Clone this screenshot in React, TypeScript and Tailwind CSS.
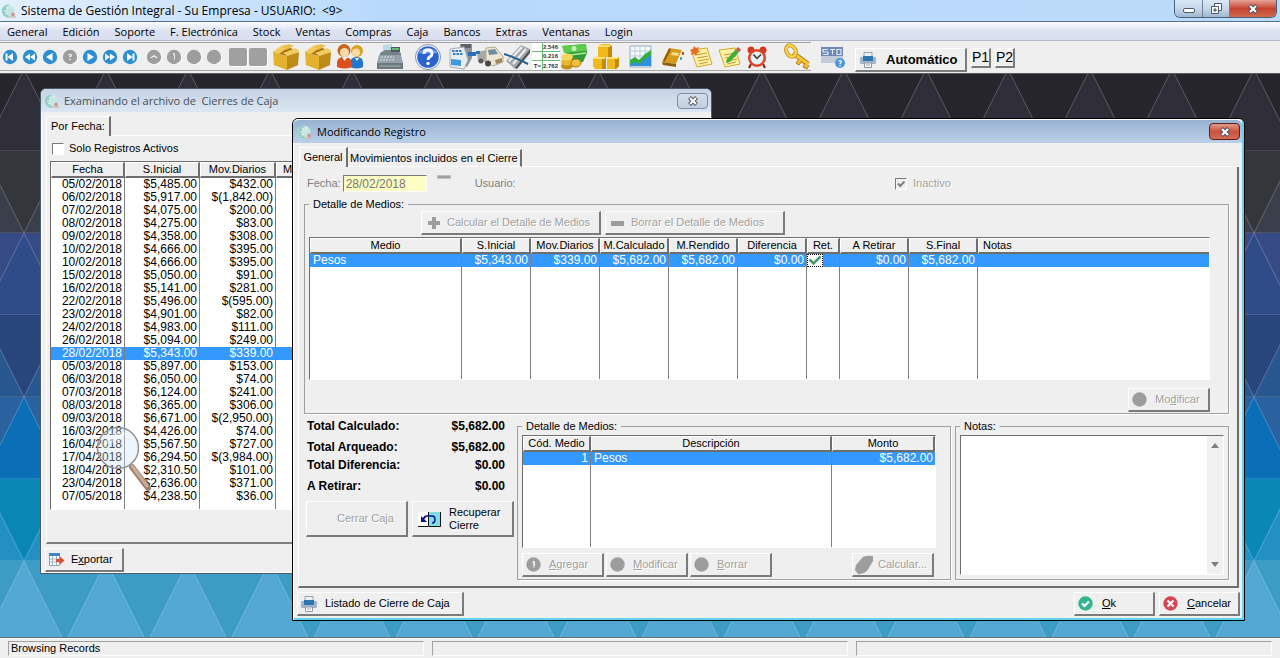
import type { ReactNode } from "react"
import clsx from "clsx"

const menuItems = [
  "General",
  "Edición",
  "Soporte",
  "F. Electrónica",
  "Stock",
  "Ventas",
  "Compras",
  "Caja",
  "Bancos",
  "Extras",
  "Ventanas",
  "Login",
]

const cierres = [
  ["05/02/2018", "$5,485.00", "$432.00"],
  ["06/02/2018", "$5,917.00", "$(1,842.00)"],
  ["07/02/2018", "$4,075.00", "$200.00"],
  ["08/02/2018", "$4,275.00", "$83.00"],
  ["09/02/2018", "$4,358.00", "$308.00"],
  ["10/02/2018", "$4,666.00", "$395.00"],
  ["10/02/2018", "$4,666.00", "$395.00"],
  ["15/02/2018", "$5,050.00", "$91.00"],
  ["16/02/2018", "$5,141.00", "$281.00"],
  ["22/02/2018", "$5,496.00", "$(595.00)"],
  ["23/02/2018", "$4,901.00", "$82.00"],
  ["24/02/2018", "$4,983.00", "$111.00"],
  ["26/02/2018", "$5,094.00", "$249.00"],
  ["28/02/2018", "$5,343.00", "$339.00"],
  ["05/03/2018", "$5,897.00", "$153.00"],
  ["06/03/2018", "$6,050.00", "$74.00"],
  ["07/03/2018", "$6,124.00", "$241.00"],
  ["08/03/2018", "$6,365.00", "$306.00"],
  ["09/03/2018", "$6,671.00", "$(2,950.00)"],
  ["16/03/2018", "$4,426.00", "$74.00"],
  ["16/04/2018", "$5,567.50", "$727.00"],
  ["17/04/2018", "$6,294.50", "$(3,984.00)"],
  ["18/04/2018", "$2,310.50", "$101.00"],
  ["23/04/2018", "$2,636.00", "$371.00"],
  ["07/05/2018", "$4,238.50", "$36.00"],
]

const totals = [
  { label: "Total Calculado:", value: "$5,682.00", gap: "mt-0" },
  { label: "Total Arqueado:", value: "$5,682.00", gap: "mt-2" },
  { label: "Total Diferencia:", value: "$0.00", gap: "mt-[5px]" },
  { label: "A Retirar:", value: "$0.00", gap: "mt-2" },
]

// up / down colours of each 82px band of the wallpaper
const bands = [
  { y: -5, up: "#302e38", down: "#26252c" },
  { y: 77, up: "#3a3f4b", down: "#33363a" },
  { y: 159, up: "#2f4b88", down: "#364a86" },
  { y: 241, up: "#28568f", down: "#28467c" },
  { y: 323, up: "#0b6fb8", down: "#2a62a0" },
  { y: 405, up: "#2390c3", down: "#0a87b5" },
  { y: 487, up: "#52a7d3", down: "#3c9cc3" },
]

function Wallpaper() {
  return (
    <svg className="absolute inset-0 h-full w-full" aria-hidden="true">
      <defs>
        {bands.map((b, i) => (
          <pattern key={i} id={`band${i}`} x={i % 2 === 0 ? 65 : 24} y={b.y} width="82" height="82" patternUnits="userSpaceOnUse">
            <rect width="82" height="82" fill={b.down} />
            <path d="M41 0L82 82H0Z" fill={b.up} stroke="#fff" strokeOpacity=".22" />
          </pattern>
        ))}
      </defs>
      {bands.map((b, i) => (
        <rect key={i} x="0" y={b.y} width="100%" height={i === bands.length - 1 ? 600 : 82} fill={`url(#band${i})`} />
      ))}
    </svg>
  )
}

function AppLogo() {
  return (
    <svg viewBox="0 0 16 16" className="h-4 w-4 shrink-0" aria-hidden="true">
      <circle cx="7" cy="8" r="6.500" fill="#c5e6e2" />
      <path d="M8 1.500A6.500 6.500 0 1 0 10 14A5.500 5.500 0 0 1 5 8Q5 4 8 1.500Z" fill="#93cdc3" />
      <path d="M5 4l2 2M3 8h3M4 11l3-1M9 5l2-2" stroke="#e9f7f5" />
      <circle cx="12" cy="11.500" r="2" fill="#cf9a92" />
      <path d="M9.500 14h5.500" stroke="#d7b3ad" strokeWidth="1.500" />
    </svg>
  )
}

const blue = "#2e8fd0"
const gray = "#9d9d9d"

function NavIcon({ fill = blue, children }: { fill?: string; children?: ReactNode }) {
  return (
    <svg viewBox="0 0 20 20" className="h-5 w-5" aria-hidden="true">
      {fill === gray && <circle cx="10.700" cy="10.700" r="7.300" fill="#fff" />}
      <circle cx="10" cy="10" r="7.200" fill={fill} />
      <g fill="#fff">{children}</g>
    </svg>
  )
}

const navButtons = [
  { name: "Primero", icon: <NavIcon><path d="M5.500 6.500h2v7h-2zM13 6v8l-5.500-4z" /></NavIcon> },
  { name: "Retroceder página", icon: <NavIcon><path d="M10 6.500v7L5 10zM15 6.500v7L10 10z" /></NavIcon> },
  { name: "Anterior", icon: <NavIcon><path d="M12.500 6v8L6 10z" /></NavIcon> },
  { name: "Consultar", icon: <NavIcon fill={gray}><path d="M8 8q2-3 4 0q0 1.500-2 2.500h-.8q0-1.500 1.500-2.500-.7-1-1.700.5zM9.500 12h1.300v1.300H9.500z" /></NavIcon> },
  { name: "Siguiente", icon: <NavIcon><path d="M7.500 6v8l6.500-4z" /></NavIcon> },
  { name: "Avanzar página", icon: <NavIcon><path d="M5 6.500v7l5-3.500zM10 6.500v7l5-3.500z" /></NavIcon> },
  { name: "Último", icon: <NavIcon><path d="M12.500 6.500h2v7h-2zM7 6v8l5.500-4z" /></NavIcon> },
]

const editButtons = [
  { name: "Subir", icon: <NavIcon fill={gray}><path d="M6 11l4-3 4 3h-1.500L10 9.500 7.500 11z" /></NavIcon> },
  { name: "Insertar", icon: <NavIcon fill={gray}><path d="M9 6h1.500l.5 3-.5 4H10V9z" /></NavIcon> },
  { name: "Cambiar", icon: <NavIcon fill={gray} /> },
  { name: "Eliminar", icon: <NavIcon fill={gray} /> },
]

function Box() {
  return (
    <svg viewBox="0 0 32 28" className="h-7 w-8" aria-hidden="true">
      <path d="M3 9l14 4v14L4 22z" fill="#e3b030" />
      <path d="M17 13l12-4-1 13-11 5z" fill="#c08a18" />
      <path d="M3 9L14 3l15 5-12 5z" fill="#a8720e" />
      <path d="M3 9l8-6 5 3-7 5zM17 13l-4-3 13-5 3 4z" fill="#f1cc5c" />
      <path d="M11 3l8-2 5 2-8 4z" fill="#ecc04a" />
    </svg>
  )
}

function Users() {
  return (
    <svg viewBox="0 0 32 28" className="h-7 w-8" aria-hidden="true">
      <circle cx="23" cy="8" r="6" fill="#d9a520" />
      <circle cx="22" cy="9.500" r="4" fill="#f8d9a8" />
      <path d="M16 24v-5q1-5 7-5 6 0 6 6v4q-6 3-13 0z" fill="#2476cc" />
      <path d="M21 15l2 3 2-3z" fill="#fff" />
      <circle cx="10" cy="7.500" r="6.500" fill="#c8651a" />
      <circle cx="10.500" cy="9.500" r="4.500" fill="#fbd9ac" />
      <path d="M3 24v-5q1-5 7-5 7 0 8 6v4q-7 3-15 0z" fill="#dd4f1c" />
      <path d="M8 14l2.500 4 3-4z" fill="#fff" />
    </svg>
  )
}

function CashRegister() {
  return (
    <svg viewBox="0 0 32 28" className="h-7 w-8" aria-hidden="true">
      <path d="M9 2l9-1v9H9z" fill="#b9dbe6" />
      <path d="M6 10l5-3h9l7 3v8H6z" fill="#77838b" />
      <path d="M17 4h9v5h-9z" fill="#4c5a62" />
      <path d="M18 5h7v2h-7z" fill="#64c070" />
      <path d="M5 12h22l2 8H3z" fill="#95a1a8" />
      <path d="M3 20h26v6H3z" fill="#6c777e" />
      <path d="M7 14h13M6 17h14" stroke="#dfe6ea" strokeDasharray="2 1" />
      <path d="M5 23h22" stroke="#a9b4ba" />
    </svg>
  )
}

function Help() {
  return (
    <svg viewBox="0 0 32 28" className="h-7 w-8" aria-hidden="true">
      <circle cx="16" cy="14" r="12.500" fill="#fff" stroke="#8090b8" />
      <circle cx="16" cy="14" r="10.800" fill="#2a62d0" />
      <path d="M6 10q10-10 20 0-8 1-20 0z" fill="#6e9cf0" />
      <path d="M12 11q0-4 4-4t4 3.500q0 2.500-2.500 3.500-1.500 1-1.500 3" fill="none" stroke="#fff" strokeWidth="2.800" />
      <circle cx="16" cy="20.500" r="1.700" fill="#fff" />
    </svg>
  )
}

function Pos() {
  return (
    <svg viewBox="0 0 28 28" className="h-7 w-7" aria-hidden="true">
      <path d="M12 1h12v14l-5 9-6-3z" fill="#8c9196" />
      <path d="M13 1h10v4H13z" fill="#5d6368" />
      <path d="M2 6l14-2 4 13-4 9-14-2z" fill="#e9edf0" stroke="#a7afb5" />
      <path d="M4 8h10M5 11h10" stroke="#2f7fd0" strokeWidth="2" strokeDasharray="2.500 1" />
      <path d="M3 16l10 1v6l-10-1z" fill="#3c9add" />
      <path d="M20 9h8v4h-8z" fill="#2a6fb8" />
    </svg>
  )
}

function Truck() {
  return (
    <svg viewBox="0 0 28 28" className="h-7 w-7" aria-hidden="true">
      <path d="M1 9l13-3 1 12-13 1z" fill="#a8aba9" />
      <path d="M10 5l9-1 6 7 2 2v6l-10 4-7-4z" fill="#eee6d2" stroke="#b3a98f" />
      <path d="M12 7l7-1 3 5-9 1z" fill="#6f8ba0" />
      <circle cx="12" cy="20.500" r="3" fill="#4a4640" />
      <circle cx="5" cy="18" r="2.500" fill="#5b5750" />
      <path d="M19 17l7-2v4l-6 2z" fill="#9b8a5e" />
      <path d="M0 8h4v3H0z" fill="#2f77bd" />
    </svg>
  )
}

function Blade() {
  return (
    <svg viewBox="0 0 28 28" className="h-7 w-7" aria-hidden="true">
      <path d="M2 18L17 2l9 4-15 20z" fill="#a4a9ad" />
      <path d="M5 18L18 4M9 21L22 6" stroke="#eef0f1" strokeWidth="2" />
      <path d="M11 25L26 6v4L13 26z" fill="#4d545a" />
      <path d="M0 11q10 3 24 10" fill="none" stroke="#24618f" strokeWidth="2" />
    </svg>
  )
}

function Sum() {
  return (
    <svg viewBox="0 0 28 28" className="h-7 w-7" aria-hidden="true">
      <path d="M0 0h28v27H0z" fill="#fff" />
      <path d="M0 8.500h28M0 17.500h28M10.500 0v27" stroke="#6cba78" />
      <g fill="#333" fontFamily="Liberation Sans, sans-serif" fontSize="6" fontWeight="700" textAnchor="end">
        <text x="26" y="6">2.546</text>
        <text x="26" y="15">0.216</text>
        <text x="26" y="25">2.762</text>
        <text x="9" y="25">T=</text>
      </g>
    </svg>
  )
}

function Money() {
  return (
    <svg viewBox="0 0 28 28" className="h-7 w-7" aria-hidden="true">
      <path d="M2 3l24-2 1 9-4 9-11 1z" fill="#2f9c35" />
      <path d="M2 3l24-2v7L4 10z" fill="#5cc94f" />
      <circle cx="14" cy="5.500" r="2.500" fill="#c8f0b4" />
      <path d="M10 12l16-2" stroke="#b4e8a0" strokeWidth="1.500" />
      <ellipse cx="7" cy="23" rx="6" ry="3.500" fill="#c98f14" />
      <ellipse cx="7" cy="19" rx="6" ry="3.500" fill="#e8b830" />
      <ellipse cx="7" cy="14" rx="6" ry="3.500" fill="#f6d560" />
      <ellipse cx="16" cy="20" rx="5" ry="4" fill="#eebe3c" stroke="#b07a10" />
    </svg>
  )
}

function Crates() {
  return (
    <svg viewBox="0 0 32 28" className="h-7 w-8" aria-hidden="true">
      <path d="M8 2l5-1h7l2 2v11H8z" fill="#f0b818" />
      <path d="M18 3h4v11h-4z" fill="#c48a08" />
      <path d="M3 14h13v12H5l-2-3zM17 14h12v9l-3 3h-9z" fill="#f0b818" />
      <path d="M12 15h4v11h-4zM25 15h4v8l-3 3h-1z" fill="#c08a0a" />
      <path d="M8 2h12v2H8zM3 14h12v2H3zM17 14h11v2H17z" fill="#fbe07a" />
    </svg>
  )
}

function Chart() {
  return (
    <svg viewBox="0 0 28 28" className="h-7 w-7" aria-hidden="true">
      <path d="M3 3h21v21H3z" fill="#f4f9fc" stroke="#93a9b8" />
      <path d="M8 3v20M13 3v20M18 3v20M3 8h21M3 13h21" stroke="#b9ccd8" />
      <path d="M3 20l5-3 4 2 6-5 6-4v13H3z" fill="#2f8fe0" />
      <path d="M3 17l5-3 4 3 6-6 6-4v5l-7 5-5 4-4-2-5 3z" fill="#35ad3c" />
    </svg>
  )
}

function Book() {
  return (
    <svg viewBox="0 0 28 28" className="h-7 w-7" aria-hidden="true">
      <path d="M3 19L10 5l13 2-6 14z" fill="#d69a1c" />
      <path d="M3 19l14 2v3L4 22z" fill="#8f5e0c" />
      <path d="M17 21l6-14 1 2-7 15z" fill="#f5f0dc" />
      <path d="M5 18L11 6" stroke="#8c5a0a" strokeWidth="2" />
      <path d="M13 9l7 1-1 3-7-1z" fill="#f7dc83" />
      <path d="M23 9h2v3h-2z" fill="#d94a2a" />
      <path d="M21 14h2v3h-2z" fill="#3aa0d8" />
    </svg>
  )
}

function Note({ pencil }: { pencil?: boolean }) {
  return (
    <svg viewBox="0 0 28 28" className="h-7 w-7" aria-hidden="true">
      <path d="M4 7l16-2 5 16-15 3z" fill="#fdf2a8" stroke="#d8a928" />
      <path d="M9 12l11-2M10 15l11-2M11 18l11-2M12 21l9-2" stroke="#c99a30" />
      {pencil ? (
        <>
          <path d="M12 16L21 6l3 3-9 10-4 1z" fill="#3fae3a" />
          <path d="M21 6l2-2 3 3-2 2z" fill="#d84a3c" />
        </>
      ) : (
        <path d="M7 3l2 2 3-1-1 3 2 2-3 1-1 3-2-2-3 1 1-3-2-2 3-1z" fill="#ee6a1c" />
      )}
    </svg>
  )
}

function Alarm() {
  return (
    <svg viewBox="0 0 28 28" className="h-7 w-7" aria-hidden="true">
      <circle cx="8" cy="7" r="3.500" fill="#d43a22" />
      <circle cx="20" cy="7" r="3.500" fill="#d43a22" />
      <path d="M8 21l-2 4M20 21l2 4" stroke="#8a1c0c" strokeWidth="2" />
      <circle cx="14" cy="15" r="9" fill="#dc4427" />
      <circle cx="14" cy="15" r="6.500" fill="#e4f3fb" />
      <path d="M10.500 11.500l3.500 4 4-4" fill="none" stroke="#333" strokeWidth="1.500" />
    </svg>
  )
}

function Key() {
  return (
    <svg viewBox="0 0 28 28" className="h-7 w-7" aria-hidden="true">
      <path d="M10 10l15 11" stroke="#b57b10" strokeWidth="5" />
      <path d="M10 10l15 11" stroke="#f5c83c" strokeWidth="3" />
      <path d="M16 16l-3 4 3 2 3-4M22 20l-2 4 4 2 2-4" fill="#f0bd30" stroke="#b57b10" />
      <ellipse cx="8" cy="8" rx="6" ry="4.500" transform="rotate(60 8 8)" fill="none" stroke="#c58c18" strokeWidth="4" />
      <ellipse cx="8" cy="8" rx="6" ry="4.500" transform="rotate(60 8 8)" fill="none" stroke="#f7d24e" strokeWidth="2.500" />
    </svg>
  )
}

function Support() {
  return (
    <svg viewBox="0 0 28 28" className="h-7 w-7" aria-hidden="true">
      <path d="M2 4h22v16H2z" fill="#c3ccda" />
      <path d="M2 4h22v9H2z" fill="#6d86bb" />
      <path d="M9 6.500H4v2.500h5v2.500H4M11 6.500h5M13.500 6.500v5M18 6.500h4v5h-4z" fill="none" stroke="#e4eaf5" strokeWidth="1.200" />
      <circle cx="21" cy="20" r="5" fill="#4b95dd" />
      <path d="M19.500 18.500q1.500-2 3 0 0 1-1.500 2v.8" fill="none" stroke="#fff" strokeWidth="1.200" />
      <circle cx="21" cy="23" r=".8" fill="#fff" />
    </svg>
  )
}

function Printer() {
  return (
    <svg viewBox="0 0 16 16" className="h-4 w-4 shrink-0" aria-hidden="true">
      <path d="M4 .5h8v5H4z" fill="#eaf2f8" stroke="#8fa5b5" />
      <path d="M0 6q0-1 1-1h14q1 0 1 1v5q0 1-1 1H1q-1 0-1-1z" fill="#9fb6c8" />
      <path d="M3 4h10v5H3z" fill="#2f74b5" />
      <path d="M4.500 11h7v4.500h-7z" fill="#fff" stroke="#8c99a3" />
      <path d="M6 13h4" stroke="#9aa5ad" />
    </svg>
  )
}

function Dot({ children }: { children?: ReactNode }) {
  return (
    <svg viewBox="0 0 16 16" className="h-4 w-4 shrink-0" aria-hidden="true">
      <circle cx="7.500" cy="7.500" r="7.200" fill={gray} />
      {children}
    </svg>
  )
}

function CloseCross() {
  return (
    <svg viewBox="0 0 12 10" className="h-2.5 w-3" aria-hidden="true">
      <path d="M2.500 1.500l7 7M9.500 1.500l-7 7" stroke="#4a4f5c" strokeWidth="4" />
      <path d="M3 2l6 6M9 2L3 8" stroke="#fff" strokeWidth="2.200" />
    </svg>
  )
}

function WinButton({ disabled, className, children }: { disabled?: boolean; className?: string; children: ReactNode }) {
  return (
    <button
      type="button"
      disabled={disabled}
      className={clsx(
        "flex items-center border-t border-l border-r-2 border-b-2 border-t-white border-l-white border-r-[#7b7b7b] border-b-[#7b7b7b] bg-[#efefef] whitespace-nowrap",
        disabled && "text-[#a0a0a0] [text-shadow:1px_1px_0_#fff]",
        className
      )}
    >
      {children}
    </button>
  )
}

function Th({ children, left }: { children?: ReactNode; left?: boolean }) {
  return (
    <th
      className={clsx(
        "h-4 overflow-hidden border-t border-l border-b-2 border-t-white border-l-white border-r-[#6e6e6e] border-b-[#6e6e6e] bg-[#efefef] p-0 leading-[13px] font-normal whitespace-nowrap",
        left ? "pl-1 text-left" : "border-r-2 text-center"
      )}
    >
      {children}
    </th>
  )
}

function Td({ children, left }: { children?: ReactNode; left?: boolean }) {
  return (
    <td
      className={clsx(
        "h-[13px] border-r border-[#808080] py-0 leading-[13px] whitespace-nowrap last:border-r-0",
        left ? "pr-0 pl-[3px] text-left" : "pr-0.5 pl-0 text-right"
      )}
    >
      {children}
    </td>
  )
}

const tableClass = "w-full table-fixed border-separate border-spacing-0"
const sunken = "border-t border-l border-r border-b border-t-[#6e6e6e] border-l-[#6e6e6e] border-r-white border-b-white bg-white"
const group = "min-w-0 border border-[#a0a0a0] [box-shadow:1px_1px_0_#fff]"

function BrowseWindow() {
  return (
    <section className="absolute top-3.5 left-10 flex w-[672px] flex-col rounded-t-md border border-[#4b5a69] bg-[#efefef] shadow-[inset_0_0_0_1px_#fff]">
      <header className="flex h-[23px] items-center rounded-t-md bg-linear-to-b from-[#c5d3e4] to-[#dbe6f2] pr-[3px] pl-[3px] text-[#4a4f57]">
        <AppLogo />
        <h2 className="ml-1 font-[Open_Sans,sans-serif] text-[11px] whitespace-pre">Examinando el archivo de  Cierres de Caja</h2>
        <button type="button" aria-label="Cerrar" className="ml-auto flex h-4 w-[31px] items-center justify-center rounded-sm border border-[#7e8ea5] bg-linear-to-b from-[#d5dfec] to-[#c0cedf]">
          <CloseCross />
        </button>
      </header>

      <div className="mt-1 ml-[5px] flex">
        <button type="button" className="h-5 w-[65px] border-t border-r-2 border-l border-t-white border-r-[#6e6e6e] border-l-white pl-1 text-left">
          Por Fecha:
        </button>
        <div className="flex-1 border-b border-white"></div>
      </div>

      <div className="mr-[5px] ml-[5px] border-b-2 border-l border-b-[#808080] border-l-white pr-1 pl-[3px] pb-8">
        <label className="flex h-[25px] items-center pl-0.5">
          <input type="checkbox" className="h-3 w-3 appearance-none border border-[#7b7b7b] border-r-white border-b-white bg-white" />
          <span className="ml-[5px]">Solo Registros Activos</span>
        </label>

        <div className={clsx("relative", sunken)}>
          <table className={tableClass}>
            <colgroup>
              <col className="w-[74px]" />
              <col className="w-[75px]" />
              <col className="w-[76px]" />
              <col className="w-[76px]" />
              <col />
            </colgroup>
            <thead>
              <tr>
                <Th>Fecha</Th>
                <Th>S.Inicial</Th>
                <Th>Mov.Diarios</Th>
                <Th>M.Calculado</Th>
                <Th left />
              </tr>
            </thead>
            <tbody className="text-[12px]">
              {cierres.map((row, i) => (
                <tr key={i} className={clsx(row[0] === "28/02/2018" && "bg-[#3399ff] text-white")}>
                  {row.map((cell, j) => (
                    <Td key={j}>{cell}</Td>
                  ))}
                  <Td />
                  <Td />
                </tr>
              ))}
              <tr>
                <td className="h-1.5 border-r border-[#808080] p-0"></td>
                <td className="border-r border-[#808080] p-0"></td>
                <td className="border-r border-[#808080] p-0"></td>
                <td className="border-r border-[#808080] p-0"></td>
                <td className="p-0"></td>
              </tr>
            </tbody>
          </table>

          {/* Locator lens over the list */}
          <svg viewBox="0 0 60 70" className="absolute bottom-4 left-11 h-[70px] w-[60px]" aria-hidden="true">
            <path d="M37 44l16 21" stroke="#9c8171" strokeWidth="6" strokeLinecap="round" />
            <path d="M37 43l15 20" stroke="#c7ad9c" strokeWidth="3" strokeLinecap="round" />
            <circle cx="23" cy="25" r="20.500" fill="#cfe6f5" fillOpacity=".35" stroke="#8d9499" strokeWidth="1.500" />
            <path d="M8 22q6-16 24-12-8 10-24 12z" fill="#fff" fillOpacity=".4" />
          </svg>
        </div>
      </div>

      <footer className="px-1 pt-1 pb-px">
        <WinButton className="h-6 w-[79px] pl-[3px]">
          <svg viewBox="0 0 16 16" className="h-4 w-4 shrink-0" aria-hidden="true">
            <path d="M.5 1.500h10v12H.5z" fill="#fff" stroke="#8aa2ba" />
            <path d="M0 1h11v3H0z" fill="#3f84c4" />
            <path d="M3.500 4v9M7.500 4v9M1 7h9M1 10h9" stroke="#9fb6cb" />
            <path d="M7 7h4V4.500l4.500 4-4.500 4V10H7z" fill="#d5523f" />
          </svg>
          <span className="ml-1.5">
            E<u>x</u>portar
          </span>
        </WinButton>
      </footer>
    </section>
  )
}

const medioHeaders = ["Medio", "S.Inicial", "Mov.Diarios", "M.Calculado", "M.Rendido", "Diferencia", "Ret.", "A Retirar", "S.Final"]

function RecordDialog() {
  return (
    <section
      role="dialog"
      aria-labelledby="dialog-title"
      className="absolute top-11 left-[292px] flex w-[953px] flex-col rounded-t-md border border-black bg-[#efefef] shadow-[inset_1px_1px_0_#fff,inset_-2px_-2px_0_#62d3ee]"
    >
      <header className="mr-0.5 flex h-6 items-center rounded-t-md border-t border-white bg-linear-to-b from-[#98b3d2] to-[#bbd0e7] pr-0.5 pl-1">
        <AppLogo />
        <h2 id="dialog-title" className="ml-1 font-[Open_Sans,sans-serif] text-[11px]">Modificando Registro</h2>
        <button type="button" aria-label="Cerrar" className="ml-auto flex h-[17px] w-[31px] items-center justify-center rounded-sm border border-[#5c1f1c] bg-linear-to-b from-[#e09a8c] via-[#cb5140] to-[#d26b55]">
          <CloseCross />
        </button>
      </header>

      <div className="mt-1 ml-1.5 flex items-end">
        <button type="button" className="h-5 w-[49px] border-t border-r-2 border-l border-t-white border-r-[#6e6e6e] border-l-white text-center">
          General
        </button>
        <button type="button" className="h-[18px] border-t border-r-2 border-b border-t-white border-r-[#6e6e6e] border-b-white px-0.5 text-left whitespace-nowrap">
          Movimientos incluidos en el Cierre
        </button>
        <div className="mr-[5px] flex-1 self-stretch border-b border-white"></div>
      </div>

      <div className="mr-[5px] ml-[5px] border-r-2 border-b-2 border-l border-r-[#6e6e6e] border-b-[#6e6e6e] border-l-white pt-2 pr-2 pb-1.5 pl-[5px]">
        <div className="flex h-[17px] items-center pl-[3px] text-[#808080]">
          <label htmlFor="fecha">Fecha:</label>
          <input
            id="fecha"
            defaultValue="28/02/2018"
            className="ml-0.5 h-[17px] w-[84px] border border-t-[#7b7b7b] border-r-white border-b-white border-l-[#7b7b7b] bg-[#fdfdc4] pl-0.5 text-[12px] text-[#777777]"
          />
          <span className="ml-2.5 h-1 w-3.5 self-start border border-[#c0c0c0] bg-[#a0a0a0]"></span>
          <span className="ml-6">Usuario:</span>
          <label className="ml-auto flex w-[334px] items-center text-[#a0a0a0] [text-shadow:1px_1px_0_#fff]">
            <span className="relative mr-1.5 flex h-3 w-3">
              <input type="checkbox" defaultChecked disabled className="h-3 w-3 appearance-none border border-[#7b7b7b] border-r-white border-b-white bg-[#efefef]" />
              <svg viewBox="0 0 12 12" className="absolute inset-0 h-3 w-3" aria-hidden="true">
                <path d="M3 5.500L5.200 8 9.500 3.500" fill="none" stroke="#808080" strokeWidth="2" />
              </svg>
            </span>
            Inactivo
          </label>
        </div>

        <fieldset className={clsx("mt-1.5 pr-[18px] pb-px pl-1", group)}>
          <legend className="h-[13px] px-1 leading-[13px]">Detalle de Medios:</legend>
          <div className="flex gap-1 pl-28">
            <WinButton disabled className="h-6 w-[180px] pl-[5px]">
              <svg viewBox="0 0 14 14" className="h-3.5 w-3.5" aria-hidden="true">
                <path d="M5 1h4v4h4v4H9v4H5V9H1V5h4z" fill={gray} />
              </svg>
              <span className="ml-1.5">Calcular el Detalle de Medios</span>
            </WinButton>
            <WinButton disabled className="h-6 w-[180px] pl-[5px]">
              <svg viewBox="0 0 14 14" className="h-3.5 w-3.5" aria-hidden="true">
                <path d="M0 5h13v5H0z" fill={gray} />
              </svg>
              <span className="ml-1.5">Borrar el Detalle de Medios</span>
            </WinButton>
          </div>

          <div className={clsx("mt-0.5", sunken)}>
            <table className={tableClass}>
              <colgroup>
                <col className="w-[152px]" />
                <col className="w-[69px]" />
                <col className="w-[69px]" />
                <col className="w-[69px]" />
                <col className="w-[69px]" />
                <col className="w-[69px]" />
                <col className="w-[33px]" />
                <col className="w-[69px]" />
                <col className="w-[69px]" />
                <col />
              </colgroup>
              <thead>
                <tr>
                  {medioHeaders.map((h) => (
                    <Th key={h}>{h}</Th>
                  ))}
                  <Th left>Notas</Th>
                </tr>
              </thead>
              <tbody className="text-[12px]">
                <tr className="bg-[#3399ff] text-white">
                  <Td left>Pesos</Td>
                  <Td>$5,343.00</Td>
                  <Td>$339.00</Td>
                  <Td>$5,682.00</Td>
                  <Td>$5,682.00</Td>
                  <Td>$0.00</Td>
                  <Td>
                    <svg viewBox="0 0 16 13" className="block h-[13px] w-4 bg-white outline-1 -outline-offset-1 outline-black outline-dotted" aria-label="Sí">
                      <path d="M2.500 5.500l4 4 7-7" fill="none" stroke="#459a6e" strokeWidth="2.500" />
                    </svg>
                  </Td>
                  <Td>$0.00</Td>
                  <Td>$5,682.00</Td>
                  <Td />
                </tr>
                <tr>
                  {medioHeaders.map((h) => (
                    <td key={h} className="h-28 border-r border-[#808080] p-0"></td>
                  ))}
                  <td className="p-0"></td>
                </tr>
              </tbody>
            </table>
          </div>

          <div className="mt-2 flex justify-end">
            <WinButton disabled className="h-6 w-[82px] pl-[3px]">
              <Dot />
              <span className="ml-[7px]">
                Mo<u>d</u>ificar
              </span>
            </WinButton>
          </div>
        </fieldset>

        <div className="mt-1.5 flex">
          <div className="w-[213px] shrink-0 pl-0.5">
            <dl className="pl-px text-[12px] leading-[13px] font-bold">
              {totals.map((row) => (
                <div key={row.label} className={clsx("flex justify-between pr-3", row.gap)}>
                  <dt>{row.label}</dt>
                  <dd>{row.value}</dd>
                </div>
              ))}
            </dl>
            <div className="mt-2 flex gap-1">
              <WinButton disabled className="h-9 w-[102px] pl-[30px]">Cerrar Caja</WinButton>
              <WinButton className="h-9 w-[102px] pl-1 leading-[13px]">
                <svg viewBox="0 0 24 18" className="h-[18px] w-6 shrink-0" aria-hidden="true">
                  <path d="M1 2h10v14H1z" fill="#fff" />
                  <path d="M12 2h11v14H12z" fill="#7fdfe6" />
                  <path d="M1 16.500h10.500V2M12 16.500h11.500V2" fill="none" stroke="#111" />
                  <path d="M9 6h6q3 0 3 3.500T15 13" fill="none" stroke="#10108a" strokeWidth="1.500" />
                  <path d="M9 6l-4 4" stroke="#10108a" strokeWidth="2" />
                  <path d="M4 6v6h6z" fill="#10108a" />
                </svg>
                <span className="ml-2 text-left">
                  Recuperar
                  <br />
                  Cierre
                </span>
              </WinButton>
            </div>
          </div>

          <fieldset className={clsx("w-[434px] shrink-0 pt-0.5 pb-px pl-1", group)}>
            <legend className="h-[13px] px-1 leading-[13px]">Detalle de Medios:</legend>
            <div className={clsx("mr-3.5", sunken)}>
              <table className={tableClass}>
                <colgroup>
                  <col className="w-[68px]" />
                  <col className="w-[241px]" />
                  <col />
                </colgroup>
                <thead>
                  <tr>
                    <Th>Cód. Medio</Th>
                    <Th>Descripción</Th>
                    <Th>Monto</Th>
                  </tr>
                </thead>
                <tbody className="text-[12px]">
                  <tr className="bg-[#3399ff] text-white">
                    <Td>1</Td>
                    <Td left>Pesos</Td>
                    <Td>$5,682.00</Td>
                  </tr>
                  <tr>
                    <td className="h-[82px] border-r border-[#808080] p-0"></td>
                    <td className="border-r border-[#808080] p-0"></td>
                    <td className="p-0"></td>
                  </tr>
                </tbody>
              </table>
            </div>
            <div className="mt-[5px] flex gap-0.5 pr-4">
              <WinButton disabled className="h-6 w-[82px] pl-[3px]">
                <Dot>
                  <path d="M6.500 4h2l.5 4-1 3h-.5V7z" fill="#fff" />
                </Dot>
                <span className="ml-[7px]"><u>A</u>gregar</span>
              </WinButton>
              <WinButton disabled className="h-6 w-[82px] pl-[3px]">
                <Dot />
                <span className="ml-[7px]"><u>M</u>odificar</span>
              </WinButton>
              <WinButton disabled className="h-6 w-[82px] pl-[3px]">
                <Dot />
                <span className="ml-[7px]"><u>B</u>orrar</span>
              </WinButton>
              <WinButton disabled className="ml-auto h-6 w-[82px] pl-px">
                <svg viewBox="0 0 20 20" className="h-5 w-5 shrink-0" aria-hidden="true">
                  <path d="M4 19l-3-4 1-5L9 2q5-2 10-1v5l-6 10q-5 4-9 3z" fill={gray} />
                </svg>
                <span className="ml-1">Calcular...</span>
              </WinButton>
            </div>
          </fieldset>

          <fieldset className={clsx("ml-1 flex-1 pt-0.5 pr-1 pb-1 pl-1", group)}>
            <legend className="h-[13px] px-1 leading-[13px]">
              <label htmlFor="notas">Notas:</label>
            </legend>
            <div className={clsx("flex h-[140px]", sunken)}>
              <textarea id="notas" className="block h-full flex-1 resize-none bg-white p-1 outline-none"></textarea>
              <div className="flex w-4 flex-col items-center justify-between bg-[#f0f0f0] py-[7px]">
                <svg viewBox="0 0 8 5" className="h-[5px] w-2" aria-hidden="true">
                  <path d="M0 5l4-5 4 5z" fill="#7e7e7e" />
                </svg>
                <svg viewBox="0 0 8 5" className="h-[5px] w-2" aria-hidden="true">
                  <path d="M0 0l4 5 4-5z" fill="#7e7e7e" />
                </svg>
              </div>
            </div>
          </fieldset>
        </div>
      </div>

      <footer className="flex gap-1 pt-1 pr-1 pb-1 pl-1">
        <WinButton className="h-6 w-[167px] pl-[3px]">
          <Printer />
          <span className="ml-2">Listado de Cierre de Caja</span>
        </WinButton>
        <WinButton className="ml-auto h-6 w-[81px] pl-[3px]">
          <svg viewBox="0 0 16 16" className="h-4 w-4 shrink-0" aria-hidden="true">
            <circle cx="7.500" cy="7.500" r="7.200" fill="#35b58f" />
            <path d="M4 7.500l2.500 2.500L11 5.500" fill="none" stroke="#fff" strokeWidth="2.200" />
          </svg>
          <span className="ml-2"><u>O</u>k</span>
        </WinButton>
        <WinButton className="h-6 w-[81px] pl-[3px]">
          <svg viewBox="0 0 16 16" className="h-4 w-4 shrink-0" aria-hidden="true">
            <circle cx="7.500" cy="7.500" r="7.200" fill="#d94452" />
            <path d="M4.500 4.500l6 6M10.500 4.500l-6 6" stroke="#fff" strokeWidth="2.200" />
          </svg>
          <span className="ml-2"><u>C</u>ancelar</span>
        </WinButton>
      </footer>
    </section>
  )
}

function ToolGroup({ items, className }: { items: { name: string; icon: ReactNode }[]; className?: string }) {
  return (
    <div className={clsx("flex items-center", className)}>
      {items.map((item) => (
        <button key={item.name} type="button" title={item.name} aria-label={item.name}>
          {item.icon}
        </button>
      ))}
    </div>
  )
}

function Toolbar() {
  return (
    <div className="flex h-[33px] items-start border-b border-[#5c5c5c] bg-[#efefef] pt-px">
      <div className="flex h-[29px] items-center border-t border-b border-[#a5a5a5]">
        <ToolGroup items={navButtons} />
        <ToolGroup items={editButtons} className="ml-1" />
        <div className="ml-[5px] flex gap-0.5">
          <span className="h-[18px] w-[18px] rounded-xs bg-[#a0a0a0] shadow-[1px_1px_0_#fff]"></span>
          <span className="h-[18px] w-[18px] rounded-xs bg-[#a0a0a0] shadow-[1px_1px_0_#fff]"></span>
        </div>
        <ToolGroup
          className="ml-[3px]"
          items={[
            { name: "Artículos", icon: <Box /> },
            { name: "Depósito", icon: <Box /> },
            { name: "Clientes", icon: <Users /> },
          ]}
        />
        <ToolGroup className="ml-2" items={[{ name: "Facturar", icon: <CashRegister /> }]} />
        <ToolGroup className="ml-1.5" items={[{ name: "Ayuda", icon: <Help /> }]} />
        <ToolGroup
          className="ml-1"
          items={[
            { name: "Punto de venta", icon: <Pos /> },
            { name: "Envíos", icon: <Truck /> },
            { name: "Materiales", icon: <Blade /> },
            { name: "Totales", icon: <Sum /> },
            { name: "Pagos", icon: <Money /> },
          ]}
        />
        <ToolGroup className="ml-0.5" items={[{ name: "Existencias", icon: <Crates /> }]} />
        <ToolGroup className="ml-[5px]" items={[{ name: "Estadísticas", icon: <Chart /> }]} />
        <ToolGroup
          className="ml-1"
          items={[
            { name: "Agenda", icon: <Book /> },
            { name: "Nota nueva", icon: <Note /> },
            { name: "Editar nota", icon: <Note pencil /> },
            { name: "Alarmas", icon: <Alarm /> },
          ]}
        />
        <ToolGroup className="ml-3" items={[{ name: "Claves", icon: <Key /> }]} />
      </div>
      <ToolGroup className="mt-px ml-2" items={[{ name: "Soporte remoto", icon: <Support /> }]} />
      <WinButton className="mt-1.5 ml-2 h-6 w-28 pl-1 text-[13px] font-bold">
        <Printer />
        <span className="ml-2.5">Automático</span>
      </WinButton>
      <WinButton className="mt-1.5 ml-1 h-5 w-5 justify-center text-[14px]">P1</WinButton>
      <WinButton className="mt-1.5 ml-1 h-5 w-5 justify-center text-[14px]">P2</WinButton>
    </div>
  )
}

export default function App() {
  return (
    <div className="flex h-screen flex-col overflow-hidden bg-[#efefef] font-[Liberation_Sans,Arial,sans-serif] text-[11px] leading-[13px] text-black">
      <header className="flex h-[22px] items-start border-b border-[#55708c] bg-linear-to-r from-[#e2effc] via-[#b8d9fc] via-30% to-[#bcdbfb] pr-[3px] pl-px">
        <div className="flex h-[21px] items-center">
          <AppLogo />
          <h1 className="ml-1 font-[Open_Sans,sans-serif] text-[12px] whitespace-pre">Sistema de Gestión Integral - Su Empresa - USUARIO:  &lt;9&gt;</h1>
        </div>
        <div className="ml-auto flex h-[18px] overflow-hidden rounded-b-md border border-t-0 border-[#4a6078]">
          <button type="button" aria-label="Minimizar" className="flex w-7 items-end justify-center border-r border-[#6d8299] bg-linear-to-b from-[#dbe8f5] via-[#c6d7e9] to-[#9fb8d2] pb-1">
            <span className="h-[5px] w-3 rounded-xs border border-[#4d5a68] bg-white"></span>
          </button>
          <button type="button" aria-label="Restaurar" className="flex w-[27px] items-center justify-center border-r border-[#6d8299] bg-linear-to-b from-[#dbe8f5] via-[#c6d7e9] to-[#9fb8d2]">
            <svg viewBox="0 0 13 13" className="h-[13px] w-[13px]" aria-hidden="true">
              <path d="M4.500 1.500h7v7h-7z" fill="#fff" stroke="#4d5a68" />
              <path d="M1.500 4.500h7v7h-7z" fill="#fff" stroke="#4d5a68" />
              <path d="M4 7h2v2H4z" fill="#9fb8d2" stroke="#4d5a68" />
            </svg>
          </button>
          <button type="button" aria-label="Cerrar" className="flex w-[46px] items-center justify-center bg-linear-to-b from-[#e3a497] via-[#c5412e] to-[#d06a50]">
            <CloseCross />
          </button>
        </div>
      </header>

      <nav className="flex h-[19px] items-center gap-[15px] border-b border-[#b3b9cc] bg-linear-to-b from-[#fbfcfe] via-[#dde2f1] to-[#d9def0] pl-[7px] font-[Open_Sans,sans-serif] text-[11px]">
        {menuItems.map((item) => (
          <a key={item} href="#">
            {item}
          </a>
        ))}
      </nav>

      <Toolbar />

      <main className="relative flex-1 overflow-hidden">
        <Wallpaper />
        <BrowseWindow />
        <RecordDialog />
      </main>

      <footer className="grid h-[21px] grid-cols-3 gap-2 border-t border-[#6e6e6e] bg-[#efefef] px-2 pt-[3px] pb-0.5 [box-shadow:inset_0_1px_0_#fff]">
        <div className="border border-t-[#a0a0a0] border-r-white border-b-white border-l-[#a0a0a0] pl-0.5">Browsing Records</div>
        <div className="border border-t-[#a0a0a0] border-r-white border-b-white border-l-[#a0a0a0]"></div>
        <div className="border border-t-[#a0a0a0] border-r-white border-b-white border-l-[#a0a0a0]"></div>
      </footer>
    </div>
  )
}
